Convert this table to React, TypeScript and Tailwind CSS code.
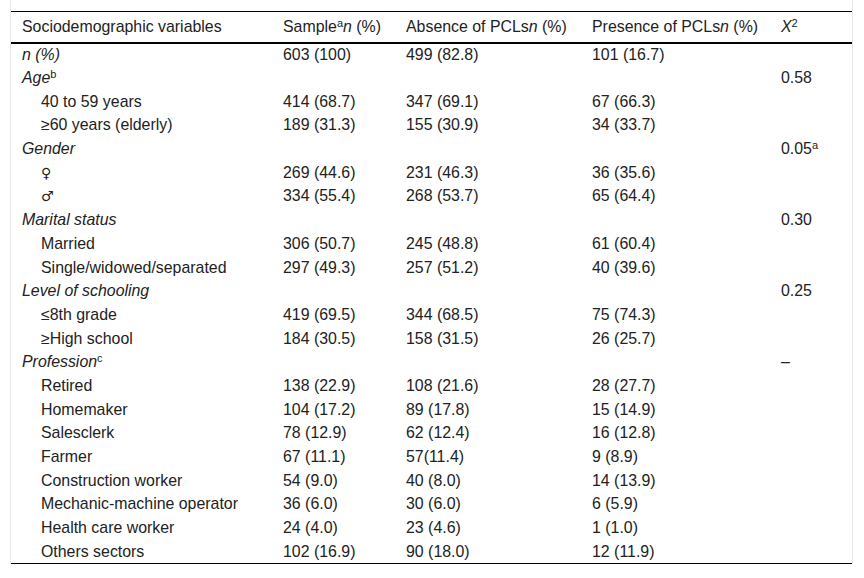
import React from "react";

type Row =
  | { kind: "cat"; label: React.ReactNode; x2?: React.ReactNode }
  | { kind: "item"; label: React.ReactNode; a: string; b: string; c: string; italic?: boolean };

const sym = (s: string) => (
  <span style={{ fontFamily: '"DejaVu Sans", sans-serif' }} className="text-[14px]">
    {s}
  </span>
);

const rows: Row[] = [
  { kind: "item", label: <i>n (%)</i>, a: "603 (100)", b: "499 (82.8)", c: "101 (16.7)", italic: true },
  { kind: "cat", label: <><i>Age</i><sup className="text-[11px]">b</sup></>, x2: "0.58" },
  { kind: "item", label: "40 to 59 years", a: "414 (68.7)", b: "347 (69.1)", c: "67 (66.3)" },
  { kind: "item", label: "≥60 years (elderly)", a: "189 (31.3)", b: "155 (30.9)", c: "34 (33.7)" },
  { kind: "cat", label: <i>Gender</i>, x2: <>0.05<sup className="text-[11px]">a</sup></> },
  { kind: "item", label: sym("♀"), a: "269 (44.6)", b: "231 (46.3)", c: "36 (35.6)" },
  { kind: "item", label: sym("♂"), a: "334 (55.4)", b: "268 (53.7)", c: "65 (64.4)" },
  { kind: "cat", label: <i>Marital status</i>, x2: "0.30" },
  { kind: "item", label: "Married", a: "306 (50.7)", b: "245 (48.8)", c: "61 (60.4)" },
  { kind: "item", label: "Single/widowed/separated", a: "297 (49.3)", b: "257 (51.2)", c: "40 (39.6)" },
  { kind: "cat", label: <i>Level of schooling</i>, x2: "0.25" },
  { kind: "item", label: "≤8th grade", a: "419 (69.5)", b: "344 (68.5)", c: "75 (74.3)" },
  { kind: "item", label: "≥High school", a: "184 (30.5)", b: "158 (31.5)", c: "26 (25.7)" },
  { kind: "cat", label: <><i>Profession</i><sup className="text-[11px]">c</sup></>, x2: "–" },
  { kind: "item", label: "Retired", a: "138 (22.9)", b: "108 (21.6)", c: "28 (27.7)" },
  { kind: "item", label: "Homemaker", a: "104 (17.2)", b: "89 (17.8)", c: "15 (14.9)" },
  { kind: "item", label: "Salesclerk", a: "78 (12.9)", b: "62 (12.4)", c: "16 (12.8)" },
  { kind: "item", label: "Farmer", a: "67 (11.1)", b: "57(11.4)", c: "9 (8.9)" },
  { kind: "item", label: "Construction worker", a: "54 (9.0)", b: "40 (8.0)", c: "14 (13.9)" },
  { kind: "item", label: "Mechanic-machine operator", a: "36 (6.0)", b: "30 (6.0)", c: "6 (5.9)" },
  { kind: "item", label: "Health care worker", a: "24 (4.0)", b: "23 (4.6)", c: "1 (1.0)" },
  { kind: "item", label: "Others sectors", a: "102 (16.9)", b: "90 (18.0)", c: "12 (11.9)" },
];

const cell = "h-[23.7px] p-0 pl-[11px] align-middle whitespace-nowrap";
const hcell = "h-[31px] p-0 pl-[11px] pt-[1px] align-middle whitespace-nowrap font-normal text-left";

export default function App() {
  return (
    <div
      className="bg-white w-[864px] h-[578px] text-[#222] text-[15.9px] leading-[18px]"
      style={{ fontFamily: '"Liberation Sans", Arial, sans-serif' }}
    >
      <div className="ml-[10px] w-[843px] border-l border-r border-[#e6e6e6] pt-[11px]">
        <table className="w-[841px] table-fixed border-collapse">
          <colgroup>
            <col className="w-[261px]" />
            <col className="w-[123px]" />
            <col className="w-[186px]" />
            <col className="w-[189px]" />
            <col className="w-[82px]" />
          </colgroup>
          <thead>
            <tr className="border-t border-black border-b-2">
              <th className={hcell}>Sociodemographic variables</th>
              <th className={hcell}>
                Sample<sup className="text-[11px]">a</sup><i>n</i> (%)
              </th>
              <th className={hcell}>
                Absence of PCLs<i>n</i> (%)
              </th>
              <th className={hcell}>
                Presence of PCLs<i>n</i> (%)
              </th>
              <th className={hcell}>
                <i>X</i>
                <sup className="text-[11px]">2</sup>
              </th>
            </tr>
          </thead>
          <tbody className="border-b border-black">
            {rows.map((r, i) =>
              r.kind === "cat" ? (
                <tr key={i}>
                  <td className={cell}>{r.label}</td>
                  <td className={cell}></td>
                  <td className={cell}></td>
                  <td className={cell}></td>
                  <td className={cell}>{r.x2}</td>
                </tr>
              ) : (
                <tr key={i}>
                  <td className={cell}>
                    {r.italic ? r.label : <span className="pl-[19px]">{r.label}</span>}
                  </td>
                  <td className={cell}>{r.a}</td>
                  <td className={cell}>{r.b}</td>
                  <td className={cell}>{r.c}</td>
                  <td className={cell}></td>
                </tr>
              )
            )}
          </tbody>
        </table>
      </div>
    </div>
  );
}
